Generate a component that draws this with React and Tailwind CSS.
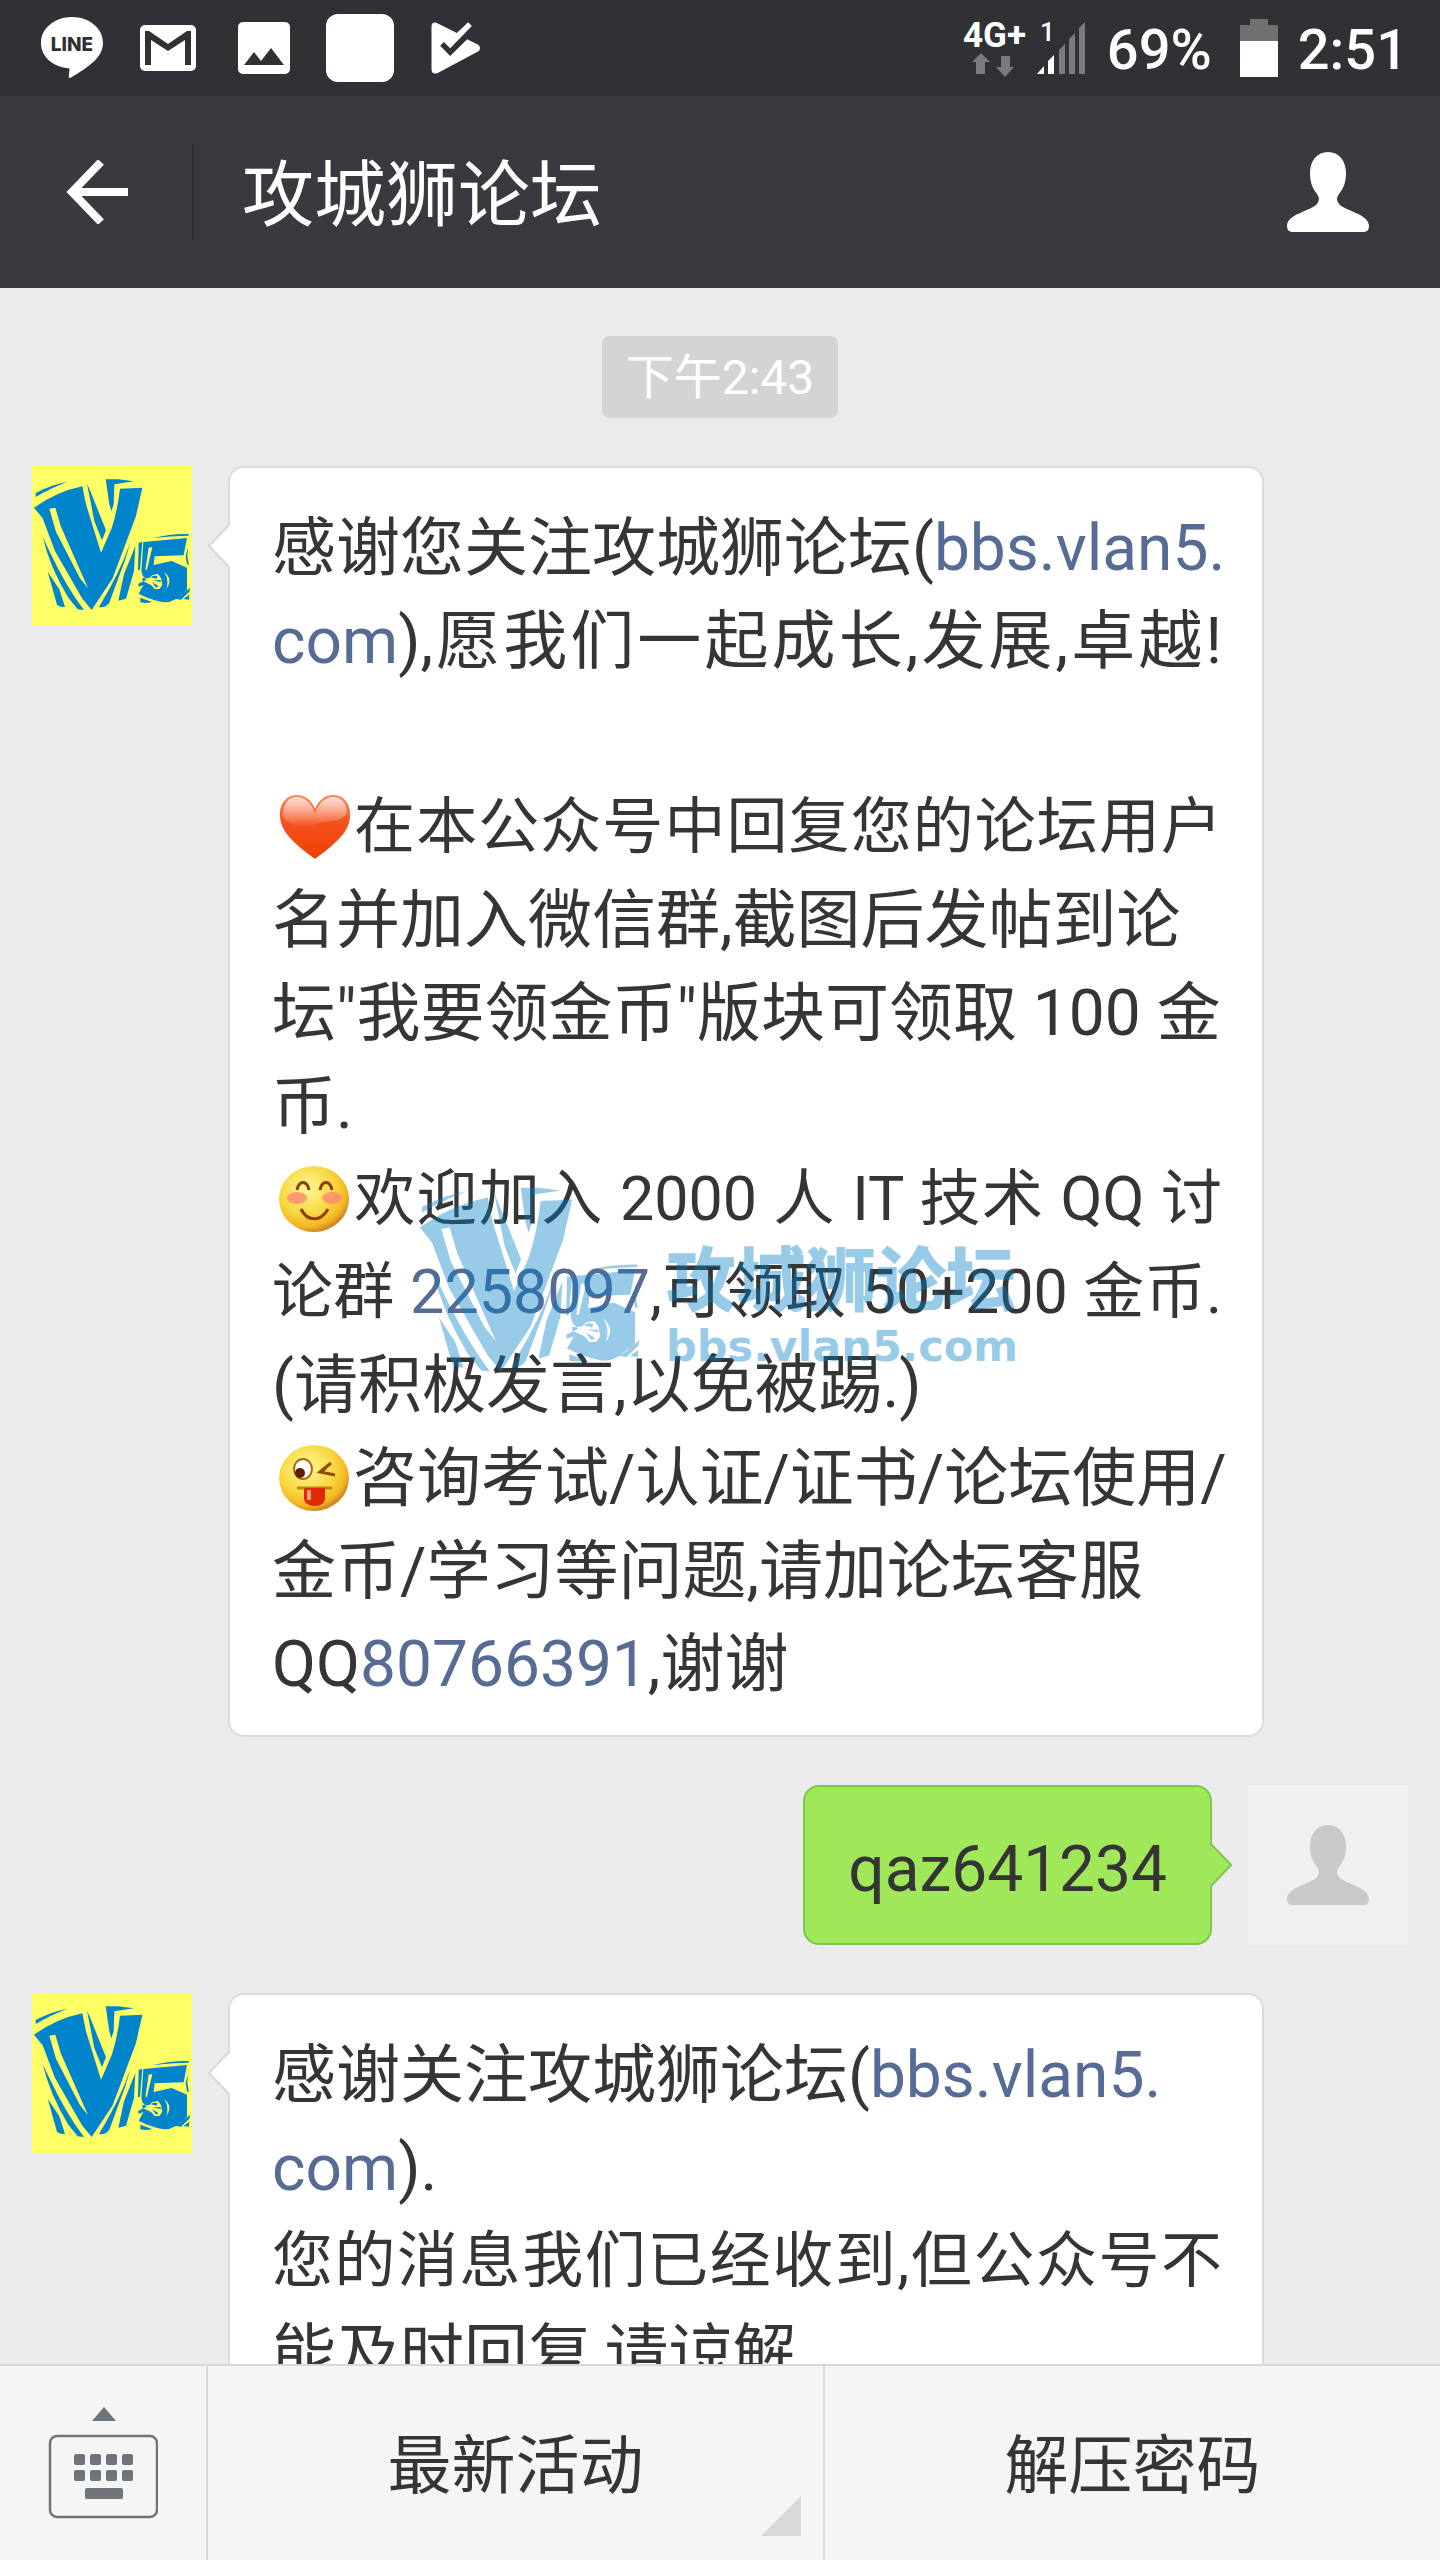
import React from 'react'

const V5_PATH = [
  'M107 168L107 156Q150 132 203 122Q150 142 107 168Z',
  'M102 200Q170 152 247 136L258 190L303 335L335 262Q352 210 360 143L427 140L408 225L338 412L275 507L246 472L165 330L128 232ZM148 203L166 200L182 255L264 442L240 412L168 272Z',
  'M261 128L270 148L318 268L306 298L283 240Z',
  'M317 115L355 115L402 121L343 130L341 190L334 211L328 190Z',
  'M128 288L148 330Q200 440 252 507L233 505L205 470Q150 380 128 288Z',
  'M143 392L178 445L195 498Q180 500 171 491Z',
  'M404 262L376 355L328 485Q315 502 297 498L330 440Q380 350 404 262Z',
  'M406 315L402 390L378 473L355 479L372 400Z',
  'M416 305L427 303L420 386L414 388Z',
  'M430 303L561 291L551 343L464 346L461 372L515 360L561 380L561 446Q525 485 492 484Q450 476 416 458L430 433L448 427L415 437L415 428L440 416L428 404L424 390ZM446 320L457 318L441 386L436 386ZM426 412L448 411L457 402L474 399L483 411L487 432L478 444L464 444L453 432L428 420ZM493 394Q520 415 499 444Q508 415 493 394Z',
  'M452 409L460 404L472 405L470 413ZM458 417L482 418L483 424ZM456 423L476 436L468 440Z',
  'M456 292Q510 278 566 279L566 284Q510 285 456 292Z',
  'M564 318L557 345L561 370L567 372L562 345Z',
  'M528 474L571 440L568 452L543 476Z',
  'M550 474L568 461L567 476Z',
  'M421 470L456 483Q440 488 421 484Z',
].join('')

function V5Logo({ className }) {
  return (
    <svg viewBox="96 75 480 480" className={className} aria-hidden="true">
      <path d={V5_PATH} fill="currentColor" fillRule="evenodd" />
    </svg>
  )
}

function LineIcon() {
  return (
    <svg viewBox="0 0 64 62" className="w-16 h-[62px]" aria-label="LINE">
      <path d="M32 0C49 0 63 11 63 26C63 41 47 51 31 60.500Q28 62 29 58L29.500 51.500C13 50 1 40 1 26C1 11 15 0 32 0Z" fill="#fff" />
      <text x="32" y="34" textAnchor="middle" fontFamily="Inter, sans-serif" fontWeight="800" fontSize="19" fill="#303135">LINE</text>
    </svg>
  )
}

function GmailIcon() {
  return (
    <svg viewBox="0 0 56 46" className="w-14 h-[46px]" aria-hidden="true">
      <rect width="56" height="46" rx="5" fill="#fff" />
      <path d="M5 40V6H9L28 19L47 6H51V40H45V15L28 26L11 15V40Z" fill="#303135" />
    </svg>
  )
}

function PhotoIcon() {
  return (
    <svg viewBox="0 0 52 52" className="w-[52px] h-[52px]" aria-hidden="true">
      <rect width="52" height="52" rx="5" fill="#fff" />
      <path d="M6 43L16 30L23 39L33 26L46 43Z" fill="#303135" />
    </svg>
  )
}

function PlayCheckIcon() {
  return (
    <svg viewBox="1239 66 149 156" className="w-[50px] h-[52px]" aria-hidden="true">
      <path d="M1240 78Q1242 64 1256 69L1316 99L1350 67L1361 78L1296 145L1277 126L1266 137L1296 168L1347 118L1380 134Q1391 144 1381 154L1260 218Q1243 226 1240 210Z" fill="#fff" />
    </svg>
  )
}

function NetworkIcon() {
  return (
    <svg viewBox="0 0 62 58" className="w-[62px] h-[58px] overflow-visible" aria-label="4G+">
      <text x="0" y="28" fontFamily="Roboto, sans-serif" fontWeight="700" fontSize="35" fill="#fff">4G+</text>
      <path d="M18 34L27 43H22V55H13V43H9Z" fill="#7a7b7f" />
      <path d="M38 37H47V48H51L42 58L33 48H38Z" fill="#7a7b7f" />
    </svg>
  )
}

function SignalIcon() {
  return (
    <svg viewBox="0 0 50 52" className="w-[50px] h-[52px] overflow-visible" aria-hidden="true">
      <text x="3" y="19" fontFamily="Roboto, sans-serif" fontWeight="500" fontSize="26" fill="#fff">1</text>
      <path d="M0 52L7 44V52ZM11 52V39L17 33V52Z" fill="#fff" />
      <path d="M22 52V28L28 22V52ZM32 52V17L38 11V52ZM42 52V6L48 0V52Z" fill="#7a7b7f" />
    </svg>
  )
}

function BatteryIcon() {
  return (
    <svg viewBox="0 0 38 58" className="w-[38px] h-[58px]" aria-hidden="true">
      <path d="M0 6H10V0H28V6H38V22H0Z" fill="#707072" />
      <path d="M0 22H38V58H0Z" fill="#fff" />
    </svg>
  )
}

function PersonIcon({ className }) {
  return (
    <svg viewBox="0 0 82 80" className={className} aria-hidden="true">
      <path d="M41 0C52 0 59 9 59 21C59 31 56 37 52 42C49 46 50 49 52 52C58 59 82 62 82 74Q82 80 76 80H6Q0 80 0 74C0 62 24 59 30 52C32 49 33 46 30 42C26 37 23 31 23 21C23 9 30 0 41 0Z" fill="currentColor" />
    </svg>
  )
}

function Heart() {
  return (
    <svg viewBox="0 0 81 70" className="inline-block align-middle w-[81px] h-[70px] mb-2.5" role="img" aria-label="爱心">
      <defs>
        <linearGradient id="heart" x1="0" y1="0" x2="0" y2="1">
          <stop offset="0" stopColor="#fb8a60" />
          <stop offset="0.45" stopColor="#f4501c" />
          <stop offset="1" stopColor="#ee4200" />
        </linearGradient>
        <linearGradient id="shine" x1="0" y1="0" x2="0" y2="1">
          <stop offset="0" stopColor="#fff" stopOpacity="0.75" />
          <stop offset="1" stopColor="#fff" stopOpacity="0" />
        </linearGradient>
      </defs>
      <path d="M43 17C47 7 54 3 61 3C72 3 79 12 78 25C77 43 56 57 43 67C30 57 9 43 8 25C7 12 14 3 25 3C32 3 39 7 43 17Z" fill="url(#heart)" />
      <path d="M43 21C47 10 54 5 61 5C69 5 75 11 75 20C68 34 52 26 43 33C34 37 16 36 11 23C11 11 17 5 25 5C32 5 39 10 43 21Z" fill="url(#shine)" />
    </svg>
  )
}

function FaceBase({ id }) {
  return (
    <>
      <defs>
        <radialGradient id={id} cx="0.4" cy="0.35" r="0.65">
          <stop offset="0" stopColor="#fff79a" />
          <stop offset="0.6" stopColor="#f8d840" />
          <stop offset="0.88" stopColor="#f3b522" />
          <stop offset="1" stopColor="#cf8a26" />
        </radialGradient>
      </defs>
      <ellipse cx="42" cy="35" rx="35" ry="33" fill={`url(#${id})`} />
    </>
  )
}

function Blush() {
  return (
    <svg viewBox="0 0 81 70" className="inline-block align-middle w-[81px] h-[70px] mb-2.5" role="img" aria-label="愉快">
      <FaceBase id="blushFace" />
      <ellipse cx="25" cy="34" rx="10" ry="6" fill="#ff8c70" opacity="0.85" />
      <ellipse cx="60" cy="34" rx="10" ry="6" fill="#ff8c70" opacity="0.85" />
      <path d="M25 26C27 16 35 16 37 26M48 26C50 16 58 16 60 26M29 45C35 58 49 58 56 45" fill="none" stroke="#8f3d00" strokeWidth="3" />
    </svg>
  )
}

function Wink() {
  return (
    <svg viewBox="0 0 81 70" className="inline-block align-middle w-[81px] h-[70px] mb-2.5" role="img" aria-label="调皮">
      <FaceBase id="winkFace" />
      <ellipse cx="31" cy="26" rx="9" ry="10" fill="#fff" stroke="#b06a00" strokeWidth="2" />
      <circle cx="28" cy="30" r="5" fill="#5a1f00" />
      <path d="M59 20L48 29L63 32M54 25L48 29" fill="none" stroke="#8f4a00" strokeWidth="3" />
      <path d="M25 45H60" stroke="#c08410" strokeWidth="3" />
      <path d="M32 45H53V56Q52 63 43 63Q33 63 32 56Z" fill="#dd2a00" />
      <path d="M37 47V57" stroke="#ff9a80" strokeWidth="4" />
    </svg>
  )
}

function KeyboardIcon() {
  return (
    <svg viewBox="-1 0 110 112" className="w-[110px] h-28" aria-hidden="true">
      <g fill="#6f7478">
        <path d="M55 0L67 14H43Z" />
        {[25, 41, 57, 73].map(x => (
          <React.Fragment key={x}>
            <rect x={x} y="47" width="11" height="11" rx="2" />
            <rect x={x} y="63" width="11" height="11" rx="2" />
          </React.Fragment>
        ))}
        <rect x="36" y="81" width="38" height="11" rx="2" />
      </g>
      <rect x="1" y="29" width="107" height="81" rx="7" fill="none" stroke="#6f7478" strokeWidth="2.500" />
    </svg>
  )
}

function Link({ children }) {
  return <a href="#" className="text-[#576b95]">{children}</a>
}

function Tail({ side }) {
  const left = side === 'left'
  return (
    <svg viewBox="0 0 22 44" aria-hidden="true"
      className={left ? 'absolute top-14 -left-[22px] w-[22px] h-11' : 'absolute top-14 -right-[22px] w-[22px] h-11'}>
      {left
        ? <path d="M22 0L1 22L22 44" fill="#fff" stroke="#d9d9d9" strokeWidth="2" />
        : <path d="M0 0L21 22L0 44" fill="#a0e85a" stroke="#7cc653" strokeWidth="2" />}
      {/* hides the bubble border behind the tail */}
      {left
        ? <path d="M22 3V41L20 40V4Z" fill="#fff" />
        : <path d="M0 3V41L2 40V4Z" fill="#a0e85a" />}
    </svg>
  )
}

const FIT = {
  wide: '[text-align-last:justify]',
  dense: 'text-[61px] [text-align-last:justify]',
}

function Incoming({ lines, children }) {
  return (
    <div className="flex items-start gap-9 pl-8 pr-44">
      <div className="w-40 h-40 shrink-0 bg-[#ffff66]">
        <V5Logo className="w-40 h-40 text-[#0084cc]" />
      </div>
      <div className="relative flex-1 min-w-0 bg-white border-2 border-[#dcdcdc] rounded-2xl pl-[42px] pr-10 pt-[34px] pb-6 text-[64px] leading-[93px] text-[#353535]">
        {lines.map((line, i) => (
          <p key={i} className={`h-[93px] whitespace-nowrap ${FIT[line.fit] || ''}`}>{line.text}</p>
        ))}
        <Tail side="left" />
        {children}
      </div>
    </div>
  )
}

const WELCOME = [
  { text: <>感谢您关注攻城狮论坛(<Link>bbs.vlan5.</Link></> },
  { text: <><Link>com</Link>),愿我们一起成长,发展,卓越!</>, fit: 'wide' },
  { text: '' },
  { text: <><Heart />在本公众号中回复您的论坛用户</>, fit: 'dense' },
  { text: '名并加入微信群,截图后发帖到论' },
  { text: '坛"我要领金币"版块可领取 100 金' },
  { text: '币.' },
  { text: <><Blush />欢迎加入 2000 人 IT 技术 QQ 讨</>, fit: 'dense' },
  { text: <>论群 <Link>2258097</Link>,可领取 50+200 金币.</>, fit: 'dense' },
  { text: '(请积极发言,以免被踢.)' },
  { text: <><Wink />咨询考试/认证/证书/论坛使用/</> },
  { text: '金币/学习等问题,请加论坛客服' },
  { text: <>QQ<Link>80766391</Link>,谢谢</> },
]

const REPLY = [
  { text: <>感谢关注攻城狮论坛(<Link>bbs.vlan5.</Link></> },
  { text: <><Link>com</Link>).</> },
  { text: '您的消息我们已经收到,但公众号不', fit: 'dense' },
  { text: '能及时回复,请谅解' },
]

function Watermark() {
  return (
    <div className="absolute left-[187px] top-[701px] flex items-start gap-6 text-[#0080c8] opacity-40 pointer-events-none">
      <V5Logo className="w-[225px] h-[225px] shrink-0" />
      <div className="pt-[73px]">
        <div className="text-[70px] leading-[80px] font-black">攻城狮论坛</div>
        <div className="font-['DejaVu_Sans'] font-bold text-[43px] leading-[48px]">bbs.vlan5.com</div>
      </div>
    </div>
  )
}

export default function App() {
  return (
    <div lang="zh-CN" className="flex flex-col h-screen bg-[#ebebeb] font-[Roboto,'Noto_Sans_CJK_SC',sans-serif]">
      <div className="flex items-center justify-between h-24 shrink-0 pl-6 pr-8 bg-[#303135] text-white">
        <div className="flex items-center">
          <div className="flex justify-center w-24"><LineIcon /></div>
          <div className="flex justify-center w-24"><GmailIcon /></div>
          <div className="flex justify-center w-24"><PhotoIcon /></div>
          <div className="flex justify-center w-24"><div className="w-[68px] h-[68px] rounded-xl bg-white" /></div>
          <div className="flex justify-center w-24"><PlayCheckIcon /></div>
        </div>
        <div className="flex items-center text-[56px] leading-none font-medium">
          <NetworkIcon />
          <div className="ml-3"><SignalIcon /></div>
          <span className="ml-5 pt-1">69%</span>
          <div className="ml-7"><BatteryIcon /></div>
          <span className="ml-5 pt-1">2:51</span>
        </div>
      </div>

      <header className="flex items-center h-48 shrink-0 bg-[#393a3f] text-white">
        <button aria-label="返回" className="flex items-center justify-center w-48 h-full">
          <svg viewBox="0 0 64 64" className="w-16 h-16" aria-hidden="true">
            <path d="M37 2L8 32L37 62M8 32H66" fill="none" stroke="#fff" strokeWidth="8" />
          </svg>
        </button>
        <div className="w-0.5 h-24 bg-[#2e2f33]" />
        <h1 className="flex-1 ml-12 pt-2 text-[72px] leading-none">攻城狮论坛</h1>
        <button aria-label="聊天信息" className="mr-[71px]">
          <PersonIcon className="w-[82px] h-20" />
        </button>
      </header>

      <main className="flex-1 min-h-0 overflow-hidden flex flex-col gap-12 pt-12">
        <div className="self-center shrink-0 px-6 pt-0.5 rounded-lg bg-[#d4d4d4] text-white text-[48px] leading-[80px]">下午2:43</div>

        <Incoming lines={WELCOME}><Watermark /></Incoming>

        <div className="flex items-start justify-end gap-9 px-8">
          <div className="relative flex items-center h-40 px-[43px] pt-2 bg-[#a0e85a] border-2 border-[#7cc653] rounded-2xl text-[64px] leading-[93px] text-[#353535]">
            qaz641234
            <Tail side="right" />
          </div>
          <div className="flex items-center justify-center w-40 h-40 shrink-0 bg-[#f0f0f0] text-[#c9c9c9]">
            <PersonIcon className="w-[82px] h-20" />
          </div>
        </div>

        <Incoming lines={REPLY} />
      </main>

      <footer className="flex h-[196px] shrink-0 bg-[#f5f5f5] border-t-2 border-[#d8d8d8] text-[64px] text-[#353535]">
        <button aria-label="键盘" className="flex items-center justify-center w-52 border-r-2 border-[#d8d8d8]">
          <KeyboardIcon />
        </button>
        <button className="relative flex-1 pt-2 border-r-2 border-[#d8d8d8]">
          最新活动
          <svg viewBox="0 0 40 40" className="absolute right-[22px] bottom-6 w-10 h-10" aria-hidden="true">
            <path d="M40 0V40H0Z" fill="#d9d9d9" />
          </svg>
        </button>
        <button className="flex-1 pt-2">解压密码</button>
      </footer>
    </div>
  )
}
